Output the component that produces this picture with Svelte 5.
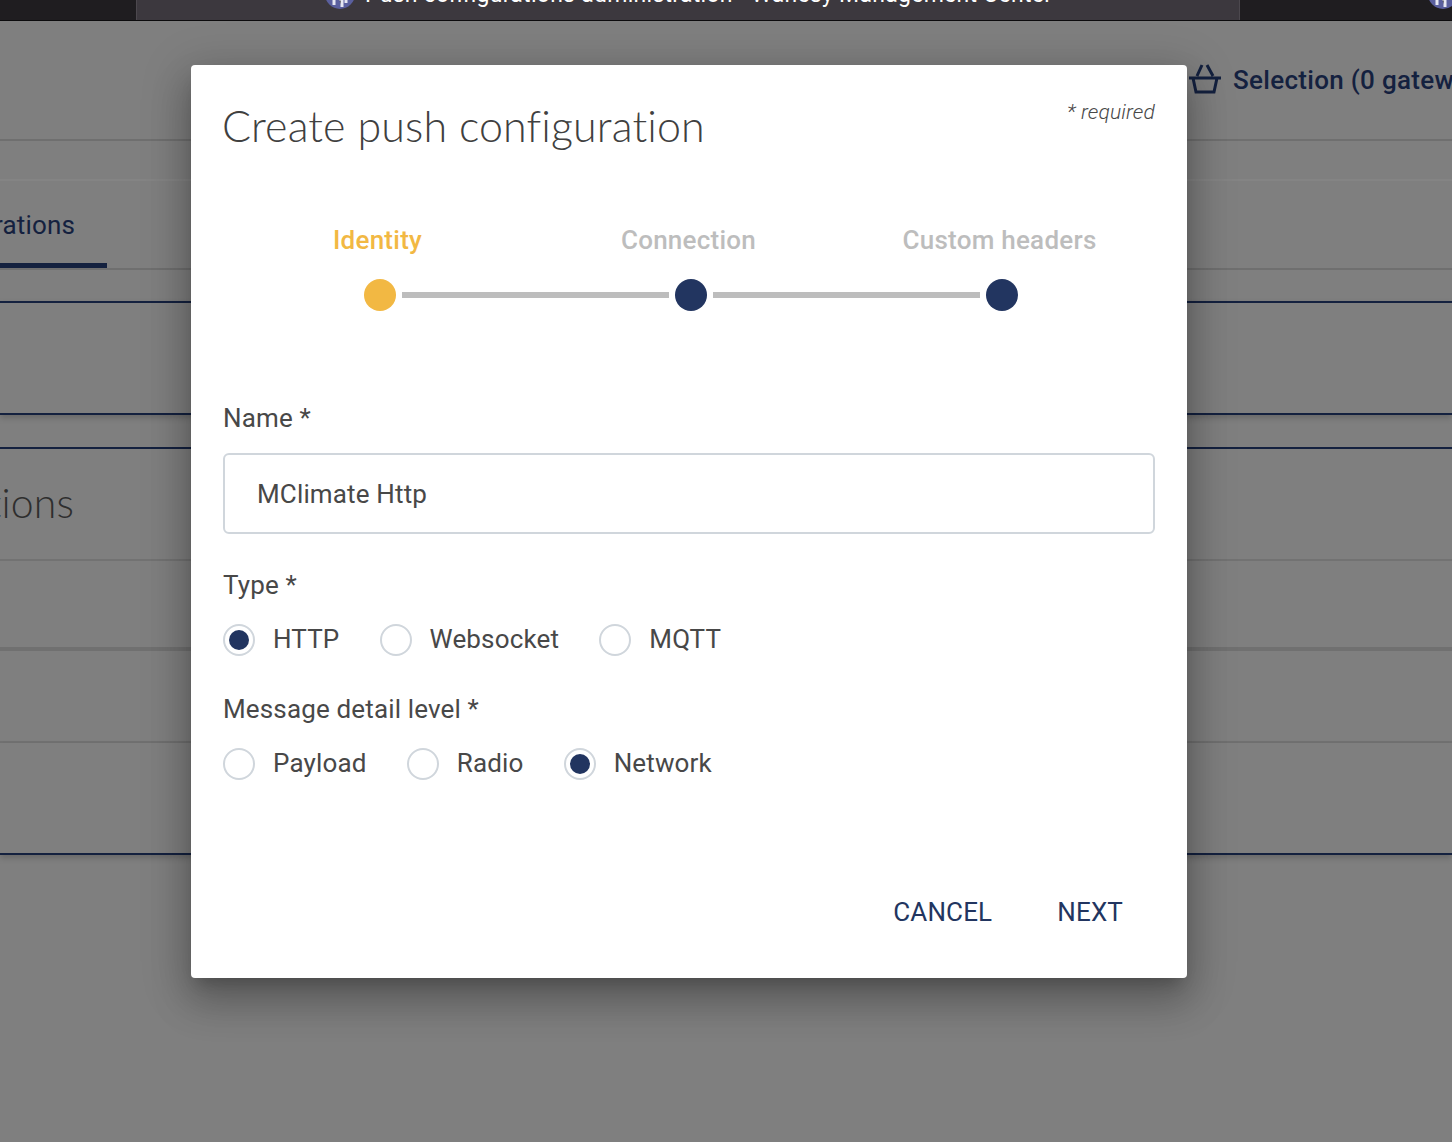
<script>
  const steps = [
    { label: 'Identity', active: true },
    { label: 'Connection' },
    { label: 'Custom headers' }
  ];
  const types = [
    { label: 'HTTP', on: true },
    { label: 'Websocket' },
    { label: 'MQTT' }
  ];
  const levels = [
    { label: 'Payload' },
    { label: 'Radio' },
    { label: 'Network', on: true }
  ];
</script>

<div class="page">
  <div class="topbar">
    <div class="tab side"></div>
    <div class="tab current">
      <svg class="favicon" width="30" height="30" viewBox="0 0 30 30">
        <circle cx="15" cy="15" r="15" fill="#5a5f9e" />
        <path d="M9 18v8M14 20h3v8M21 16v8" stroke="#e6e7f2" stroke-width="3" />
      </svg>
      <span>Push configurations administration - Wanesy Management Center</span>
    </div>
    <div class="tab rest">
      <svg class="favicon end" width="30" height="30" viewBox="0 0 30 30">
        <circle cx="15" cy="15" r="15" fill="#5a5f9e" />
        <path d="M9 18v8M14 20h3v8" stroke="#e6e7f2" stroke-width="3" />
      </svg>
    </div>
  </div>

  <div class="backdrop">
    <header class="head">
      <div class="selection">
        <svg width="34" height="30" viewBox="0 0 34 30" fill="none" stroke="#14213f" stroke-width="3">
          <path d="M1 14h32M5 14l3 14h18l3-14M9 12l5-11M25 12l-6-11" />
        </svg>
        <span>Selection (0 gateways)</span>
      </div>
    </header>
    <div class="strip"></div>
    <div class="tabs">
      <div class="tablabel">Push configurations</div>
    </div>
    <div class="gap"></div>
    <div class="box"></div>
    <div class="gap short"></div>
    <div class="section">
      <h2>Push configurations</h2>
    </div>
    <div class="row first"></div>
    <div class="row second"></div>
    <div class="row third"></div>
  </div>

  <div class="modal">
    <div class="modal-top">
      <h1>Create push configuration</h1>
      <span class="required">* required</span>
    </div>

    <div class="stepper">
      {#each steps as step, i}
        <div class="step" class:active={step.active}>
          <div class="step-label">{step.label}</div>
          <div class="track">
            <span class="dot"></span>
            {#if i < steps.length - 1}
              <span class="bar"></span>
            {/if}
          </div>
        </div>
      {/each}
    </div>

    <div class="label name-label">Name *</div>
    <div class="input"><span>MClimate Http</span></div>

    <div class="label type-label">Type *</div>
    <div class="radios">
      {#each types as t}
        <div class="radio" class:on={t.on}><span class="ring"></span><span class="text">{t.label}</span></div>
      {/each}
    </div>

    <div class="label detail-label">Message detail level *</div>
    <div class="radios">
      {#each levels as t}
        <div class="radio" class:on={t.on}><span class="ring"></span><span class="text">{t.label}</span></div>
      {/each}
    </div>

    <div class="actions">
      <span>CANCEL</span>
      <span>NEXT</span>
    </div>
  </div>
</div>

<style>
  :global(body) {
    margin: 0;
    background: #7f7f7f;
  }

  .page {
    position: relative;
    width: 1452px;
    height: 1142px;
    overflow: hidden;
    font-family: Roboto, sans-serif;
    letter-spacing: 0.15px;
    background: #7f7f7f;
  }

  .topbar {
    display: flex;
    height: 20px;
    border-bottom: 1px solid #0c0b0d;
    overflow: hidden;
    background: #1f1d20;
  }

  .tab {
    display: flex;
    align-items: flex-end;
    height: 20px;
    flex: none;
  }

  .side {
    width: 136px;
    border-right: 1px solid #4c484e;
  }

  .current {
    width: 1102px;
    box-sizing: border-box;
    padding-left: 188px;
    gap: 10px;
    background: #3c383e;
    color: #fff;
    font-size: 23px;
    letter-spacing: 0.27px;
    line-height: 20px;
  }

  .current span {
    margin-bottom: 15px;
    white-space: nowrap;
  }

  .favicon {
    flex: none;
    margin-bottom: 11px;
  }

  .rest {
    flex: 1;
    border-left: 1px solid #4c484e;
  }

  .end {
    margin-left: 188px;
  }

  .head {
    height: 118px;
    border-bottom: 2px solid #6f6f6f;
    display: flex;
    justify-content: flex-end;
    color: #14213f;
  }

  .selection {
    display: flex;
    gap: 11px;
    width: 264px;
    height: 32px;
    margin-top: 43px;
    font-size: 26px;
    font-weight: 500;
    letter-spacing: 0.3px;
    line-height: 32px;
    white-space: nowrap;
    overflow: hidden;
    flex: none;
  }

  .selection svg {
    flex: none;
  }

  .strip {
    height: 38px;
    border-bottom: 2px solid #848484;
  }

  .tabs {
    height: 87px;
    border-bottom: 2px solid #6f6f6f;
    display: flex;
    justify-content: flex-end;
    flex-direction: column;
    color: #14213f;
  }

  .tablabel {
    width: 75px;
    padding-right: 32px;
    height: 52px;
    border-bottom: 5px solid #14213f;
    font-size: 26px;
    line-height: 28px;
    white-space: nowrap;
    direction: rtl;
    overflow: hidden;
  }

  .gap {
    height: 31px;
  }

  .gap.short {
    height: 32px;
  }

  .box {
    height: 110px;
    border-top: 2px solid #14213f;
    border-bottom: 2px solid #14213f;
    box-shadow: 0 3px 6px rgba(0, 0, 0, 0.18);
  }

  .section {
    height: 110px;
    border-top: 2px solid #14213f;
    border-bottom: 2px solid #727272;
    overflow: hidden;
  }

  .section h2 {
    width: 74px;
    margin: 30px 0 0;
    font-family: Lato, sans-serif;
    font-weight: 300;
    font-size: 41px;
    line-height: 48px;
    color: #2e2e2e;
    white-space: nowrap;
    direction: rtl;
    overflow: hidden;
  }

  .row.first {
    height: 86px;
    border-bottom: 4px solid #707070;
  }

  .row.second {
    height: 90px;
    border-bottom: 2px solid #727272;
  }

  .row.third {
    height: 110px;
    border-bottom: 2px solid #14213f;
    box-shadow: 0 3px 6px rgba(0, 0, 0, 0.18);
  }

  .modal {
    position: absolute;
    left: 191px;
    top: 65px;
    width: 996px;
    height: 913px;
    box-sizing: border-box;
    padding: 32px;
    background: #fff;
    border-radius: 4px;
    color: #484848;
    box-shadow: 0 11px 15px -7px rgba(0, 0, 0, 0.2), 0 24px 38px 3px rgba(0, 0, 0, 0.18), 0 9px 46px 8px rgba(0, 0, 0, 0.16);
  }

  .modal-top {
    display: flex;
    justify-content: space-between;
    align-items: flex-start;
    height: 60px;
  }

  h1 {
    margin: 0 0 0 -1px;
    font-family: Lato, sans-serif;
    font-size: 43px;
    font-weight: 300;
    line-height: 58px;
    letter-spacing: 0.12px;
    font-variant-ligatures: none;
    color: #404040;
  }

  .required {
    font-size: 21px;
    font-style: italic;
    font-weight: 300;
    line-height: 30px;
  }

  .stepper {
    display: flex;
    margin-top: 68px;
  }

  .step {
    width: 311px;
    flex: none;
  }

  .step-label {
    padding-right: 2px;
    font-size: 26px;
    font-weight: 500;
    letter-spacing: 0.25px;
    line-height: 30px;
    color: #bdbdbd;
    text-align: center;
  }

  .active .step-label {
    color: #f2b843;
  }

  .track {
    display: flex;
    align-items: center;
    gap: 6px;
    margin-top: 24px;
    padding-left: 141px;
  }

  .dot {
    width: 32px;
    height: 32px;
    border-radius: 50%;
    background: #223560;
    flex: none;
  }

  .active .dot {
    background: #f2b843;
  }

  .bar {
    width: 267px;
    height: 6px;
    background: #bdbdbd;
    flex: none;
    margin-right: -200px;
  }

  .label {
    font-size: 26px;
    line-height: 30px;
  }

  .name-label {
    margin-top: 92px;
  }

  .input {
    display: flex;
    align-items: center;
    height: 81px;
    margin-top: 20px;
    padding-left: 32px;
    box-sizing: border-box;
    border: 2px solid #d0d6dc;
    border-radius: 6px;
    font-size: 26px;
  }

  .input span {
    margin-top: 1px;
  }

  .type-label {
    margin-top: 36px;
  }

  .detail-label {
    margin-top: 38px;
  }

  .radios {
    display: flex;
    gap: 40.2px;
    margin-top: 24px;
    height: 32px;
  }

  .radio {
    display: flex;
    align-items: center;
    gap: 18px;
    font-size: 26px;
    line-height: 32px;
  }

  .radio .text {
    margin-top: -2px;
  }

  .ring {
    width: 32px;
    height: 32px;
    box-sizing: border-box;
    border: 2px solid #d0d6dc;
    border-radius: 50%;
    flex: none;
    position: relative;
  }

  .on .ring::after {
    content: '';
    position: absolute;
    inset: 4px;
    border-radius: 50%;
    background: #223560;
  }

  .actions {
    display: flex;
    justify-content: flex-end;
    gap: 65px;
    margin-top: 116px;
    padding-right: 32px;
    font-size: 26px;
    line-height: 32px;
    color: #223560;
  }
</style>
